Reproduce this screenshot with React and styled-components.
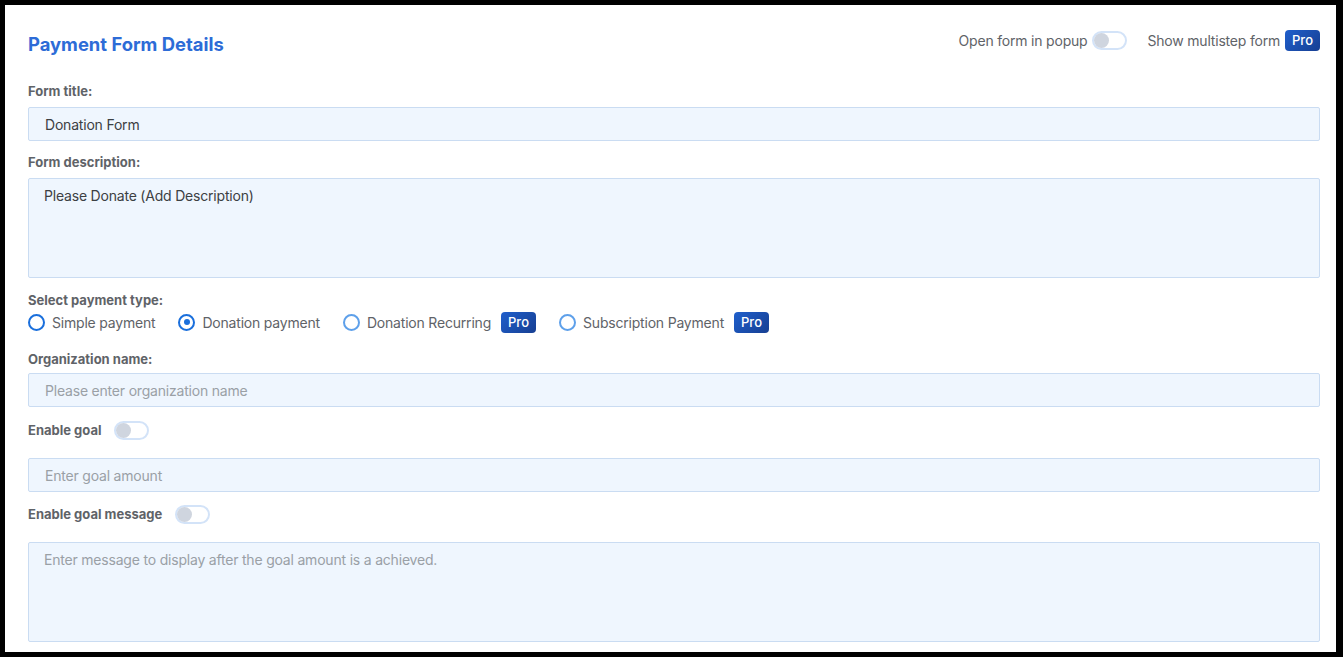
import React from "react";
import styled, { createGlobalStyle } from "styled-components";

const GlobalStyle = createGlobalStyle`
    html, body {
        margin: 0;
        padding: 0;
        background: #000;
    }
    * {
        box-sizing: border-box;
    }
`;

function App() {
    return (
        <>
            <GlobalStyle />
            <Frame>
                <Card>
                    <Header>
                        <Title>Payment Form Details</Title>
                        <HeaderOptions>
                            <OptionText>Open form in popup</OptionText>
                            <Toggle />
                            <OptionText $gap>Show multistep form</OptionText>
                            <ProBadge>Pro</ProBadge>
                        </HeaderOptions>
                    </Header>

                    <Label $top={19}>Form title:</Label>
                    <Input defaultValue="Donation Form" />

                    <Label>Form description:</Label>
                    <TextArea defaultValue="Please Donate (Add Description)" />

                    <Label $top={14} $bottom={4}>Select payment type:</Label>
                    <RadioRow>
                        <RadioItem>
                            <Radio />
                            <RadioText>Simple payment</RadioText>
                        </RadioItem>
                        <RadioItem>
                            <Radio $checked />
                            <RadioText>Donation payment</RadioText>
                        </RadioItem>
                        <RadioItem>
                            <Radio $light />
                            <RadioText>Donation Recurring</RadioText>
                            <ProBadge>Pro</ProBadge>
                        </RadioItem>
                        <RadioItem>
                            <Radio $light />
                            <RadioText>Subscription Payment</RadioText>
                            <ProBadge>Pro</ProBadge>
                        </RadioItem>
                    </RadioRow>

                    <Label $top={19} $bottom={6}>Organization name:</Label>
                    <Input placeholder="Please enter organization name" />

                    <SwitchRow>
                        <SwitchLabel>Enable goal</SwitchLabel>
                        <Toggle />
                    </SwitchRow>
                    <Input placeholder="Enter goal amount" />

                    <SwitchRow $top={12}>
                        <SwitchLabel>Enable goal message</SwitchLabel>
                        <Toggle />
                    </SwitchRow>
                    <TextArea placeholder="Enter message to display after the goal amount is a achieved." />
                </Card>
            </Frame>
        </>
    );
}

const Frame = styled.div`
    width: 1343px;
    height: 657px;
    padding: 5px 7px 5px 5px;
    background: #000;
`;

const Card = styled.div`
    height: 100%;
    background: #fff;
    padding: 19px 16px 0 23px;
    display: flex;
    flex-direction: column;
    font-family: Inter, "Noto Sans", sans-serif;
    overflow: hidden;
`;

const Header = styled.div`
    height: 40px;
    display: flex;
    align-items: center;
    justify-content: space-between;
`;

const Title = styled.h2`
    margin: 0;
    font-size: 18.4px;
    font-weight: 700;
    color: #2d6cd7;
`;

const HeaderOptions = styled.div`
    display: flex;
    align-items: center;
    margin-top: -8px;
`;

const OptionText = styled.span`
    font-size: 14px;
    letter-spacing: -0.2px;
    color: #5f6368;
    margin-right: 5px;
    margin-left: ${(props) => (props.$gap ? "20px" : "0")};
`;

const ProBadge = styled.span`
    display: inline-flex;
    align-items: center;
    justify-content: center;
    height: 21px;
    padding: 0 7px;
    border-radius: 4px;
    background: linear-gradient(135deg, #1f5fcc 0%, #173f92 100%);
    color: #fff;
    font-size: 13px;
    font-weight: 500;
`;

const Toggle = styled.span`
    position: relative;
    display: inline-block;
    width: 35px;
    height: 19px;
    border: 2px solid #d3e3f8;
    border-radius: 10px;
    background: #fff;
    &::after {
        content: "";
        position: absolute;
        left: 0;
        top: 0;
        width: 15px;
        height: 15px;
        border-radius: 50%;
        background: #cfd5df;
    }
`;

const Label = styled.div`
    margin-top: ${(props) => props.$top ?? 13}px;
    margin-bottom: ${(props) => props.$bottom ?? 8}px;
    font-size: 13px;
    line-height: 16px;
    font-weight: 700;
    color: #5f6368;
`;

const fieldStyles = `
    width: 100%;
    border: 1px solid #cadcf2;
    border-radius: 2px;
    background: #eff6fe;
    font-family: Inter, "Noto Sans", sans-serif;
    font-size: 14px;
    letter-spacing: -0.2px;
    color: #3c4043;
    outline: none;
    &::placeholder {
        color: #9aa0a6;
    }
`;

const Input = styled.input`
    ${fieldStyles}
    height: 34px;
    padding: 0 16px;
    flex-shrink: 0;
`;

const TextArea = styled.textarea`
    ${fieldStyles}
    height: 100px;
    padding: 8px 15px;
    resize: none;
    flex-shrink: 0;
    line-height: 17px;
`;

const RadioRow = styled.div`
    height: 20px;
    display: flex;
    align-items: center;
    gap: 23px;
`;

const RadioItem = styled.label`
    display: flex;
    align-items: center;
    gap: 10px;
`;

const Radio = styled.span`
    position: relative;
    width: 17px;
    height: 17px;
    border-radius: 50%;
    border: 2px solid ${(props) => (props.$light ? "#5ea0ea" : "#1a6fdc")};
    margin-right: -3px;
    &::after {
        content: "";
        display: ${(props) => (props.$checked ? "block" : "none")};
        position: absolute;
        left: 50%;
        top: 50%;
        width: 6px;
        height: 6px;
        margin: -3px 0 0 -3px;
        border-radius: 50%;
        background: #1a6fdc;
    }
`;

const RadioText = styled.span`
    font-size: 14px;
    letter-spacing: -0.2px;
    color: #5f6368;
`;

const SwitchRow = styled.div`
    margin-top: ${(props) => props.$top ?? 13}px;
    margin-bottom: 18px;
    height: 20px;
    display: flex;
    align-items: center;
    gap: 13px;
`;

const SwitchLabel = styled.span`
    font-size: 13px;
    font-weight: 700;
    color: #5f6368;
`;

export default App;
